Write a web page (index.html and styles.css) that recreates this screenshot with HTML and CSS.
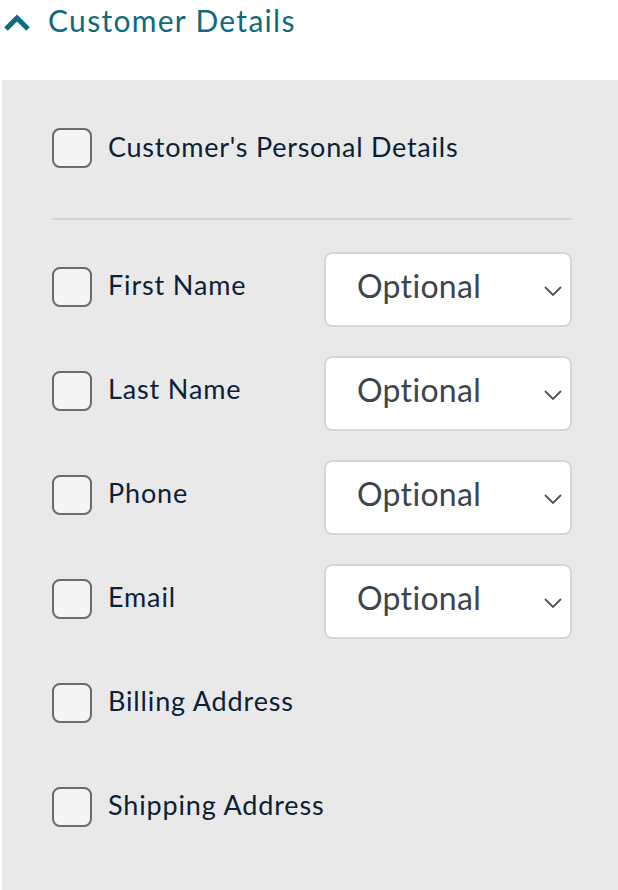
FILE: index.html
```html
<!DOCTYPE html>
<html>
<head>
<meta charset="utf-8">
<link rel="stylesheet" href="styles.css">
</head>
<body>
<div class="header">
  <svg class="hdr-chev" width="28" height="18" viewBox="0 0 28 18"><path d="M3 15 L14 4 L25 15" fill="none" stroke="#0e6a80" stroke-width="5"/></svg>
  <span class="hdr-title">Customer Details</span>
</div>
<div class="panel">
  <div class="row-top">
    <span class="cb"></span><span class="label">Customer's Personal Details</span>
  </div>
  <div class="divider"></div>
  <div class="rows">
    <div class="row"><span class="cb"></span><span class="label">First Name</span>
      <div class="select"><span>Optional</span><svg width="18" height="10" viewBox="0 0 18 10"><path d="M1 1 L9 9 L17 1" fill="none" stroke="#4a515a" stroke-width="1.8"/></svg></div></div>
    <div class="row"><span class="cb"></span><span class="label">Last Name</span>
      <div class="select"><span>Optional</span><svg width="18" height="10" viewBox="0 0 18 10"><path d="M1 1 L9 9 L17 1" fill="none" stroke="#4a515a" stroke-width="1.8"/></svg></div></div>
    <div class="row"><span class="cb"></span><span class="label">Phone</span>
      <div class="select"><span>Optional</span><svg width="18" height="10" viewBox="0 0 18 10"><path d="M1 1 L9 9 L17 1" fill="none" stroke="#4a515a" stroke-width="1.8"/></svg></div></div>
    <div class="row"><span class="cb"></span><span class="label">Email</span>
      <div class="select"><span>Optional</span><svg width="18" height="10" viewBox="0 0 18 10"><path d="M1 1 L9 9 L17 1" fill="none" stroke="#4a515a" stroke-width="1.8"/></svg></div></div>
    <div class="row"><span class="cb"></span><span class="label">Billing Address</span></div>
    <div class="row"><span class="cb"></span><span class="label">Shipping Address</span></div>
  </div>
</div>
</body>
</html>
```
FILE: styles.css
```css
html, body { margin: 0; padding: 0; background: #fff; }
body { font-family: Lato, "Noto Sans", sans-serif; width: 618px; height: 890px; overflow: hidden; }
.header { height: 80px; display: flex; align-items: flex-start; }
.hdr-chev { margin: 14px 0 0 3px; }
.hdr-title { margin: 0 0 0 17px; font-size: 30px; line-height: 40px; color: #0e6a80; letter-spacing: 1.3px; }
.panel { margin-left: 2px; background: #e9e9e9; height: 810px; box-sizing: border-box; padding: 48px 46px 0 50px; }
.row-top { display: flex; align-items: center; height: 40px; }
.cb { flex: none; width: 40px; height: 40px; box-sizing: border-box; border: 2px solid #6c6c6c; border-radius: 8px; background: #f4f4f4; }
.label { margin-left: 16px; font-size: 27px; line-height: 40px; color: #0b2138; letter-spacing: 0.85px; }
.row-top .label { margin-top: -2px; letter-spacing: 0.75px; }
.divider { margin-top: 50px; height: 2px; background: #d4d4d4; }
.rows { margin-top: 32px; display: flex; flex-direction: column; gap: 29px; }
.row { display: flex; align-items: flex-start; height: 75px; }
.row .cb { margin-top: 15px; }
.row .label { margin-top: 13px; }
.select { margin-left: auto; width: 248px; height: 75px; box-sizing: border-box; border: 2px solid #d3d7dc; border-radius: 8px; background: #fff; display: flex; align-items: center; padding: 0 8px 0 31px; font-size: 32px; color: #3d454d; letter-spacing: 0.3px; }
.select span { flex: 1; margin-top: -8px; }
.select svg { flex: none; margin-top: 2px; }
```
